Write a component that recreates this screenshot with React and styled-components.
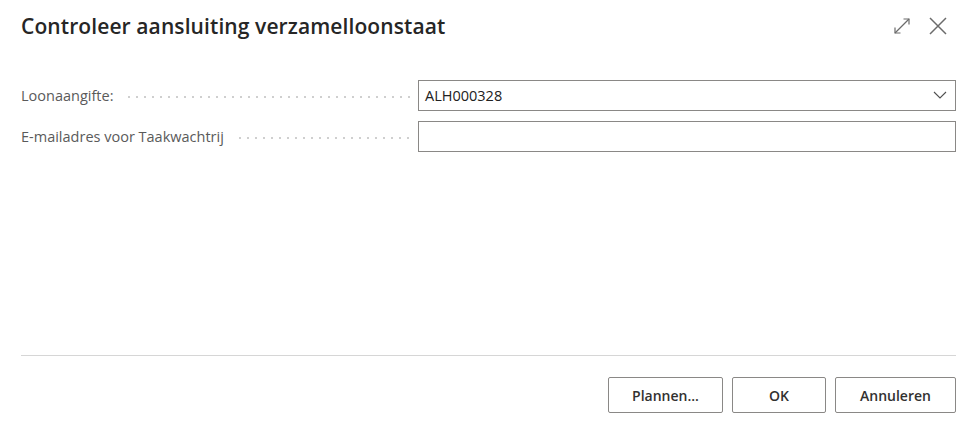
import React from "react"
import styled, { createGlobalStyle } from "styled-components"

const Global = createGlobalStyle`
  html, body {
    margin: 0;
    padding: 0;
    background: #fff;
  }
  body {
    font-family: "Segoe UI", "Open Sans", "Noto Sans", sans-serif;
    color: #212121;
  }
`

const Dialog = styled.div`
  width: 973px;
  height: 427px;
  box-sizing: border-box;
  padding: 0 17px 0 21px;
  display: flex;
  flex-direction: column;
`

const Header = styled.div`
  display: flex;
  align-items: center;
  justify-content: space-between;
  height: 51px;
`

const Title = styled.h1`
  margin: 0;
  font-size: 21px;
  font-weight: 600;
  color: #262626;
  letter-spacing: 0.1px;
`

const HeaderTools = styled.div`
  display: flex;
  align-items: center;
  gap: 16px;
  margin-right: 8px;
  color: #6b6b6b;
`

const IconButton = styled.button`
  border: 0;
  background: none;
  padding: 0;
  width: 20px;
  height: 20px;
  display: flex;
  align-items: center;
  justify-content: center;
  color: inherit;
  cursor: pointer;
`

const Fields = styled.div`
  display: flex;
  flex-direction: column;
  gap: 10px;
  margin-top: 29px;
`

const Row = styled.div`
  display: grid;
  grid-template-columns: 397px 1fr;
  align-items: center;
`

const Label = styled.label`
  display: flex;
  align-items: center;
  font-size: 14.5px;
  color: #5a5a5a;
  white-space: nowrap;
  overflow: hidden;

  &::after {
    content: "";
    flex: 1;
    height: 2px;
    margin: 2px 8px 0 12px;
    background-image: radial-gradient(circle, #cfcfcf 0.8px, transparent 1px);
    background-size: 8px 2px;
    background-repeat: repeat-x;
  }
`

const Field = styled.div`
  position: relative;
  height: 31px;
  box-sizing: border-box;
  border: 1px solid #8a8886;
  display: flex;
  align-items: center;
  padding: 0 6px;
  font-size: 14.5px;
  color: #212121;
`

const Chevron = styled.svg`
  position: absolute;
  right: 8px;
  top: 9px;
`

const Spacer = styled.div`
  flex: 1;
`

const Divider = styled.hr`
  margin: 0;
  border: 0;
  border-top: 1px solid #d6d6d6;
`

const Footer = styled.div`
  display: flex;
  justify-content: flex-end;
  gap: 9px;
  padding: 21px 0 14px;
`

const Button = styled.button`
  height: 36px;
  width: ${p => p.$w}px;
  box-sizing: border-box;
  border: 1px solid #8a8886;
  border-radius: 2px;
  background: #fff;
  font-family: inherit;
  font-size: 14px;
  font-weight: 600;
  color: #323130;
  padding: 0;
`

export default function App() {
  return (
    <Dialog>
      <Global />
      <Header>
        <Title>Controleer aansluiting verzamelloonstaat</Title>
        <HeaderTools>
          <IconButton aria-label="Uitvouwen">
            <svg width="18" height="18" viewBox="0 0 18 18" fill="none" stroke="currentColor" strokeWidth="1.2">
              <path d="M2 16 L16 2" />
              <path d="M10.5 2 H16 V7.5" />
              <path d="M2 10.5 V16 H7.5" />
            </svg>
          </IconButton>
          <IconButton aria-label="Sluiten">
            <svg width="18" height="18" viewBox="0 0 18 18" fill="none" stroke="currentColor" strokeWidth="1.5">
              <path d="M1 1 L17 17 M17 1 L1 17" />
            </svg>
          </IconButton>
        </HeaderTools>
      </Header>
      <Fields>
        <Row>
          <Label>Loonaangifte:</Label>
          <Field>
            ALH000328
            <Chevron width="14" height="10" viewBox="0 0 14 10" fill="none" stroke="#505050" strokeWidth="1.1">
              <path d="M1 2 L7 8 L13 2" />
            </Chevron>
          </Field>
        </Row>
        <Row>
          <Label>E-mailadres voor Taakwachtrij</Label>
          <Field />
        </Row>
      </Fields>
      <Spacer />
      <Divider />
      <Footer>
        <Button $w={115}>Plannen...</Button>
        <Button $w={94}>OK</Button>
        <Button $w={121}>Annuleren</Button>
      </Footer>
    </Dialog>
  )
}
